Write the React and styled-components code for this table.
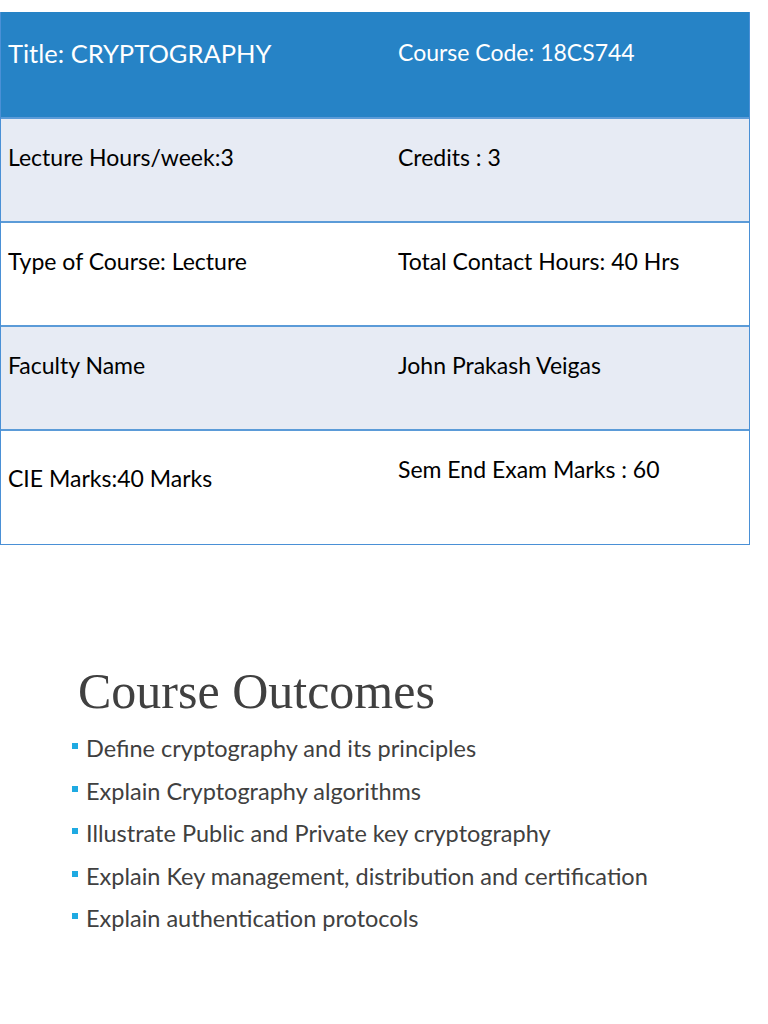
import React from 'react';
import styled, { createGlobalStyle } from 'styled-components';

const GlobalStyle = createGlobalStyle`
  body {
    margin: 0;
    background: #ffffff;
    font-family: Lato, "Open Sans", sans-serif;
  }
`;

const Page = styled.div`
  width: 768px;
  height: 1024px;
  padding-top: 12px;
  box-sizing: border-box;
  overflow: hidden;
`;

const Table = styled.div`
  width: 750px;
  border-left: 1px solid #4a90d6;
  border-right: 1px solid #4a90d6;
  border-bottom: 1px solid #4a90d6;
  box-sizing: border-box;
`;

const Row = styled.div`
  display: grid;
  grid-template-columns: 390px 1fr;
  height: ${p => p.h}px;
  background: ${p => p.bg};
  border-top: ${p => (p.head ? 'none' : '2px solid #5b9bd8')};
  box-sizing: border-box;
`;

const Cell = styled.div`
  padding: ${p => p.top}px 8px 0 7px;
  font-size: ${p => p.size || 23}px;
  line-height: 1.2;
  white-space: nowrap;
  color: ${p => (p.light ? '#ffffff' : '#000000')};
`;

const Outcomes = styled.section`
  padding: 116px 0 0 72px;
`;

const Heading = styled.h2`
  margin: 0 0 6px 6px;
  font-family: "Liberation Serif", "Times New Roman", serif;
  font-weight: normal;
  font-size: 50px;
  line-height: 1.2;
  color: #404040;
`;

const List = styled.ul`
  list-style: none;
  margin: 0;
  padding: 0;
`;

const Item = styled.li`
  display: flex;
  align-items: center;
  height: 42.5px;
  font-size: 23.5px;
  color: #404040;
  white-space: nowrap;
`;

const Bullet = styled.span`
  width: 6px;
  height: 6px;
  background: #1faae2;
  margin-right: 8px;
  flex-shrink: 0;
  position: relative;
  top: -2px;
`;

const rows = [
  { h: 105, bg: '#2683c6', head: true, cells: [['Title: CRYPTOGRAPHY', 26, 25.5], ['Course Code: 18CS744', 27]] },
  { h: 104, bg: '#e7ebf4', cells: [['Lecture Hours/week:3', 25], ['Credits : 3', 25]] },
  { h: 104, bg: '#ffffff', cells: [['Type of Course: Lecture', 25], ['Total Contact Hours: 40 Hrs', 25]] },
  { h: 104, bg: '#e7ebf4', cells: [['Faculty Name', 25], ['John Prakash Veigas', 25]] },
  { h: 115, bg: '#ffffff', cells: [['CIE Marks:40 Marks', 34], ['Sem End Exam Marks : 60', 25]] },
];

const outcomes = [
  'Define cryptography and its principles',
  'Explain Cryptography algorithms',
  'Illustrate Public and Private key cryptography',
  'Explain Key management, distribution and certification',
  'Explain authentication protocols',
];

export default function App() {
  return (
    <Page>
      <GlobalStyle />
      <Table>
        {rows.map((r, i) => (
          <Row key={i} h={r.h} bg={r.bg} head={r.head}>
            {r.cells.map(([text, top, size], j) => (
              <Cell key={j} top={top} size={size} light={r.head}>
                {text}
              </Cell>
            ))}
          </Row>
        ))}
      </Table>
      <Outcomes>
        <Heading>Course Outcomes</Heading>
        <List>
          {outcomes.map(o => (
            <Item key={o}>
              <Bullet />
              {o}
            </Item>
          ))}
        </List>
      </Outcomes>
    </Page>
  );
}
